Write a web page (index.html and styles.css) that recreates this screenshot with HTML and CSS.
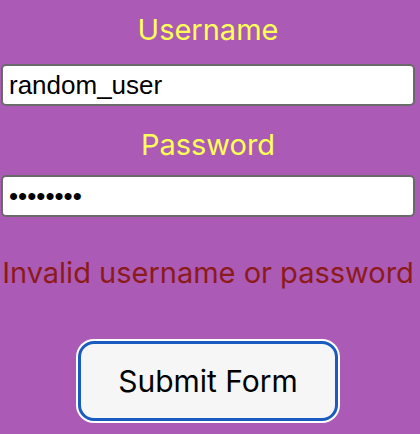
FILE: index.html
```html
<!DOCTYPE html>
<html lang="en">
<head>
<meta charset="utf-8">
<title>Login</title>
<link rel="stylesheet" href="styles.css">
</head>
<body>
<form class="form">
  <label class="label" for="user">Username</label>
  <input class="field" id="user" type="text" value="random_user">
  <label class="label label-pass" for="pass">Password</label>
  <input class="field" id="pass" type="password" value="password">
  <p class="error">Invalid username or password</p>
  <button class="submit" type="button">Submit Form</button>
</form>
</body>
</html>
```
FILE: styles.css
```css
html, body {
  margin: 0;
  padding: 0;
  background: #ab5ab5;
  height: 100%;
}
.form {
  width: 416px;
  display: flex;
  flex-direction: column;
  align-items: center;
  font-family: Inter, "Noto Sans", sans-serif;
}
.label {
  color: #ffff55;
  font-size: 29px;
  line-height: 36px;
  margin-top: 12px;
  margin-bottom: 16px;
}
.label-pass {
  margin-top: 21px;
  margin-bottom: 12px;
}
.field {
  box-sizing: border-box;
  width: 414px;
  height: 42px;
  margin: 0 1px;
  padding: 0 6px;
  border: 2px solid #6a6a6a;
  border-radius: 5px;
  background: #fff;
  color: #000;
  font-family: "Liberation Sans", Arial, sans-serif;
  font-size: 26px;
  outline: none;
}
.error {
  color: #8b1a1a;
  font-size: 29px;
  line-height: 36px;
  margin: 38px 0 0;
}
.submit {
  margin-top: 50px;
  box-sizing: border-box;
  width: 260px;
  height: 80px;
  border: 3px solid #1a5bbf;
  border-radius: 16px;
  box-shadow: 0 0 0 2px #ffffff;
  background: #f6f6f6;
  color: #000;
  font-family: Inter, "Noto Sans", sans-serif;
  font-size: 30px;
  padding: 0;
}
```
